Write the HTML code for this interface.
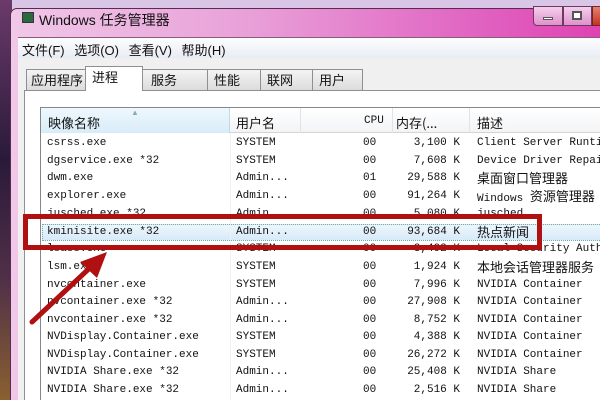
<!DOCTYPE html>
<html><head><meta charset="utf-8"><style>
*{margin:0;padding:0;box-sizing:border-box}
html,body{width:600px;height:400px;overflow:hidden}
body{position:relative;background:#d9c6e6;font-family:"Liberation Sans","Noto Sans CJK SC",sans-serif}
#w{position:absolute;left:0;top:0;width:600px;height:400px;overflow:hidden}
.abs{position:absolute}
.row{position:absolute;left:41px;width:559px;height:17px;font-family:"Liberation Mono","Noto Sans CJK SC",monospace;font-size:11px;line-height:17px;color:#111;white-space:nowrap;overflow:hidden}
.row span{position:absolute;top:0}
.c1{left:6px}.c2{left:195px}.c3{left:322px}.c4{left:339px;width:80px;text-align:right}.c5{left:436px}
.cjk{font-family:"Noto Sans CJK SC",sans-serif;font-size:13px;line-height:16px}
.row .in{position:static}
.tab{position:absolute;top:69px;height:21px;background:linear-gradient(#f4f4f4,#dcdcdc);border:1px solid #8e8f8f;border-bottom:none;font-size:13px;line-height:20px;padding-left:4px;color:#111;font-family:"Noto Sans CJK SC",sans-serif}
</style></head><body><div id="w">
<div class="abs" style="left:0;top:0;width:12px;height:400px;background:linear-gradient(#6a3a6a,#2a1a3a 40%,#503048 70%,#8a6030)"></div>
<div class="abs" style="left:10px;top:8px;width:600px;height:400px;border-radius:7px 0 0 0;background:linear-gradient(90deg,#f0c8e8,#e8a0d8 40%,#e060c0 80%,#e040b0);border:1px solid #5a2a50"></div>
<div class="abs" style="left:22px;top:12px;width:12px;height:11px;background:#2a6a3a;border:1px solid #334"></div>
<div class="abs" style="left:39px;top:10px;font-size:14px;color:#111;font-family:'Liberation Sans','Noto Sans CJK SC',sans-serif">Windows 任务管理器</div>
<div class="abs" style="left:533px;top:6px;width:30px;height:20px;border:1px solid #6a3a60;border-radius:0 0 0 4px;background:linear-gradient(#f4d0ec,#e090cc)"></div>
<div class="abs" style="left:543px;top:17px;width:10px;height:3px;background:#fff;border:1px solid #555"></div>
<div class="abs" style="left:563px;top:6px;width:29px;height:20px;border:1px solid #6a3a60;background:linear-gradient(#f4d0ec,#e090cc)"></div>
<div class="abs" style="left:572px;top:11px;width:10px;height:9px;background:#fff;border:2px solid #555"></div>
<div class="abs" style="left:592px;top:6px;width:20px;height:20px;border:1px solid #6a2a20;background:linear-gradient(#e88070,#c83020)"></div>
<div class="abs" style="left:18px;top:37px;width:600px;height:400px;background:#f0f0f0;border-top:1px solid #8a5a80"></div>
<div class="abs" style="left:18px;top:38px;width:600px;height:20px;background:linear-gradient(#fdfdfe,#e8ecf4)"></div>
<div class="abs" style="left:22px;top:40px;font-size:13px;color:#111;font-family:'Liberation Sans','Noto Sans CJK SC',sans-serif;word-spacing:6px">文件(F) 选项(O) 查看(V) 帮助(H)</div>
<div class="abs" style="left:24px;top:90px;width:600px;height:320px;background:#fff;border:1px solid #8e8f8f"></div>
<div class="tab" style="left:26px;width:60px">应用程序</div>
<div class="tab" style="left:142px;width:66px;padding-left:8px">服务</div>
<div class="tab" style="left:207px;width:54px;padding-left:6px">性能</div>
<div class="tab" style="left:260px;width:53px;padding-left:6px">联网</div>
<div class="tab" style="left:312px;width:51px;padding-left:6px">用户</div>
<div class="tab" style="left:85px;top:66px;height:25px;width:58px;background:#fff;padding-left:6px;line-height:20px;z-index:2">进程</div>
<div class="abs" style="left:40px;top:107px;width:600px;height:300px;background:#fff;border:1px solid #828790"></div>
<div class="abs" style="left:41px;top:108px;width:600px;height:25px;background:linear-gradient(#fff,#f3f4f6);border-bottom:1px solid #d5d5d5"></div>
<div class="abs" style="left:41px;top:108px;width:189px;height:25px;background:linear-gradient(#eef8fd,#d8ecf8);border-right:1px solid #c0d8e8"></div>
<div class="abs" style="left:300px;top:108px;width:1px;height:25px;background:#e3e3e3"></div>
<div class="abs" style="left:392px;top:108px;width:1px;height:25px;background:#e3e3e3"></div>
<div class="abs" style="left:469px;top:108px;width:1px;height:25px;background:#e3e3e3"></div>
<div class="abs" style="left:131px;top:108px;font-size:8px;color:#8ab">▲</div>
<div class="abs" style="left:48px;top:113px;font-size:13px;font-family:'Noto Sans CJK SC',sans-serif;color:#111">映像名称</div>
<div class="abs" style="left:236px;top:113px;font-size:13px;font-family:'Noto Sans CJK SC',sans-serif;color:#111">用户名</div>
<div class="abs" style="left:364px;top:115px;font-size:11px;font-family:'Liberation Mono',monospace;color:#111">CPU</div>
<div class="abs" style="left:396px;top:113px;font-size:13px;font-family:'Noto Sans CJK SC',sans-serif;color:#111">内存(...</div>
<div class="abs" style="left:477px;top:113px;font-size:13px;font-family:'Noto Sans CJK SC',sans-serif;color:#111">描述</div>
<div class="abs" style="left:42px;top:224px;width:600px;height:17px;background:linear-gradient(#eef6fc,#d6eaf8);border:1px dotted #7aa"></div>
<div class="row" style="top:135px"><span class="c1">csrss.exe</span><span class="c2">SYSTEM</span><span class="c3">00</span><span class="c4">3,100 K</span><span class="c5">Client Server Runtime</span></div>
<div class="row" style="top:153px"><span class="c1">dgservice.exe *32</span><span class="c2">SYSTEM</span><span class="c3">00</span><span class="c4">7,608 K</span><span class="c5">Device Driver Repair</span></div>
<div class="row" style="top:170px"><span class="c1">dwm.exe</span><span class="c2">Admin...</span><span class="c3">01</span><span class="c4">29,588 K</span><span class="c5 cjk">桌面窗口管理器</span></div>
<div class="row" style="top:188px"><span class="c1">explorer.exe</span><span class="c2">Admin...</span><span class="c3">00</span><span class="c4">91,264 K</span><span class="c5">Windows <span class="cjk in">资源管理器</span></span></div>
<div class="row" style="top:206px"><span class="c1">jusched.exe *32</span><span class="c2">Admin...</span><span class="c3">00</span><span class="c4">5,080 K</span><span class="c5">jusched</span></div>
<div class="row" style="top:224px"><span class="c1">kminisite.exe *32</span><span class="c2">Admin...</span><span class="c3">00</span><span class="c4">93,684 K</span><span class="c5 cjk">热点新闻</span></div>
<div class="row" style="top:241px"><span class="c1">lsass.exe</span><span class="c2">SYSTEM</span><span class="c3">00</span><span class="c4">3,492 K</span><span class="c5">Local Security Authority</span></div>
<div class="row" style="top:259px"><span class="c1">lsm.exe</span><span class="c2">SYSTEM</span><span class="c3">00</span><span class="c4">1,924 K</span><span class="c5 cjk">本地会话管理器服务</span></div>
<div class="row" style="top:277px"><span class="c1">nvcontainer.exe</span><span class="c2">SYSTEM</span><span class="c3">00</span><span class="c4">7,996 K</span><span class="c5">NVIDIA Container</span></div>
<div class="row" style="top:294px"><span class="c1">nvcontainer.exe *32</span><span class="c2">Admin...</span><span class="c3">00</span><span class="c4">27,908 K</span><span class="c5">NVIDIA Container</span></div>
<div class="row" style="top:312px"><span class="c1">nvcontainer.exe *32</span><span class="c2">Admin...</span><span class="c3">00</span><span class="c4">8,752 K</span><span class="c5">NVIDIA Container</span></div>
<div class="row" style="top:329px"><span class="c1">NVDisplay.Container.exe</span><span class="c2">SYSTEM</span><span class="c3">00</span><span class="c4">4,388 K</span><span class="c5">NVIDIA Container</span></div>
<div class="row" style="top:347px"><span class="c1">NVDisplay.Container.exe</span><span class="c2">SYSTEM</span><span class="c3">00</span><span class="c4">26,272 K</span><span class="c5">NVIDIA Container</span></div>
<div class="row" style="top:364px"><span class="c1">NVIDIA Share.exe *32</span><span class="c2">Admin...</span><span class="c3">00</span><span class="c4">25,408 K</span><span class="c5">NVIDIA Share</span></div>
<div class="row" style="top:382px"><span class="c1">NVIDIA Share.exe *32</span><span class="c2">Admin...</span><span class="c3">00</span><span class="c4">2,516 K</span><span class="c5">NVIDIA Share</span></div>
<div class="abs" style="left:230px;top:133px;width:1px;height:270px;background:#f0f0f0"></div>
<div class="abs" style="left:23px;top:214px;width:519px;height:36px;border:5px solid #b01010"></div>
<svg class="abs" style="left:0;top:0" width="600" height="400"><line x1="32" y1="322" x2="94" y2="264" stroke="#b01010" stroke-width="5" stroke-linecap="round"/><polygon points="107,252 80,262 97,278" fill="#b01010"/></svg>
</div></body></html>
